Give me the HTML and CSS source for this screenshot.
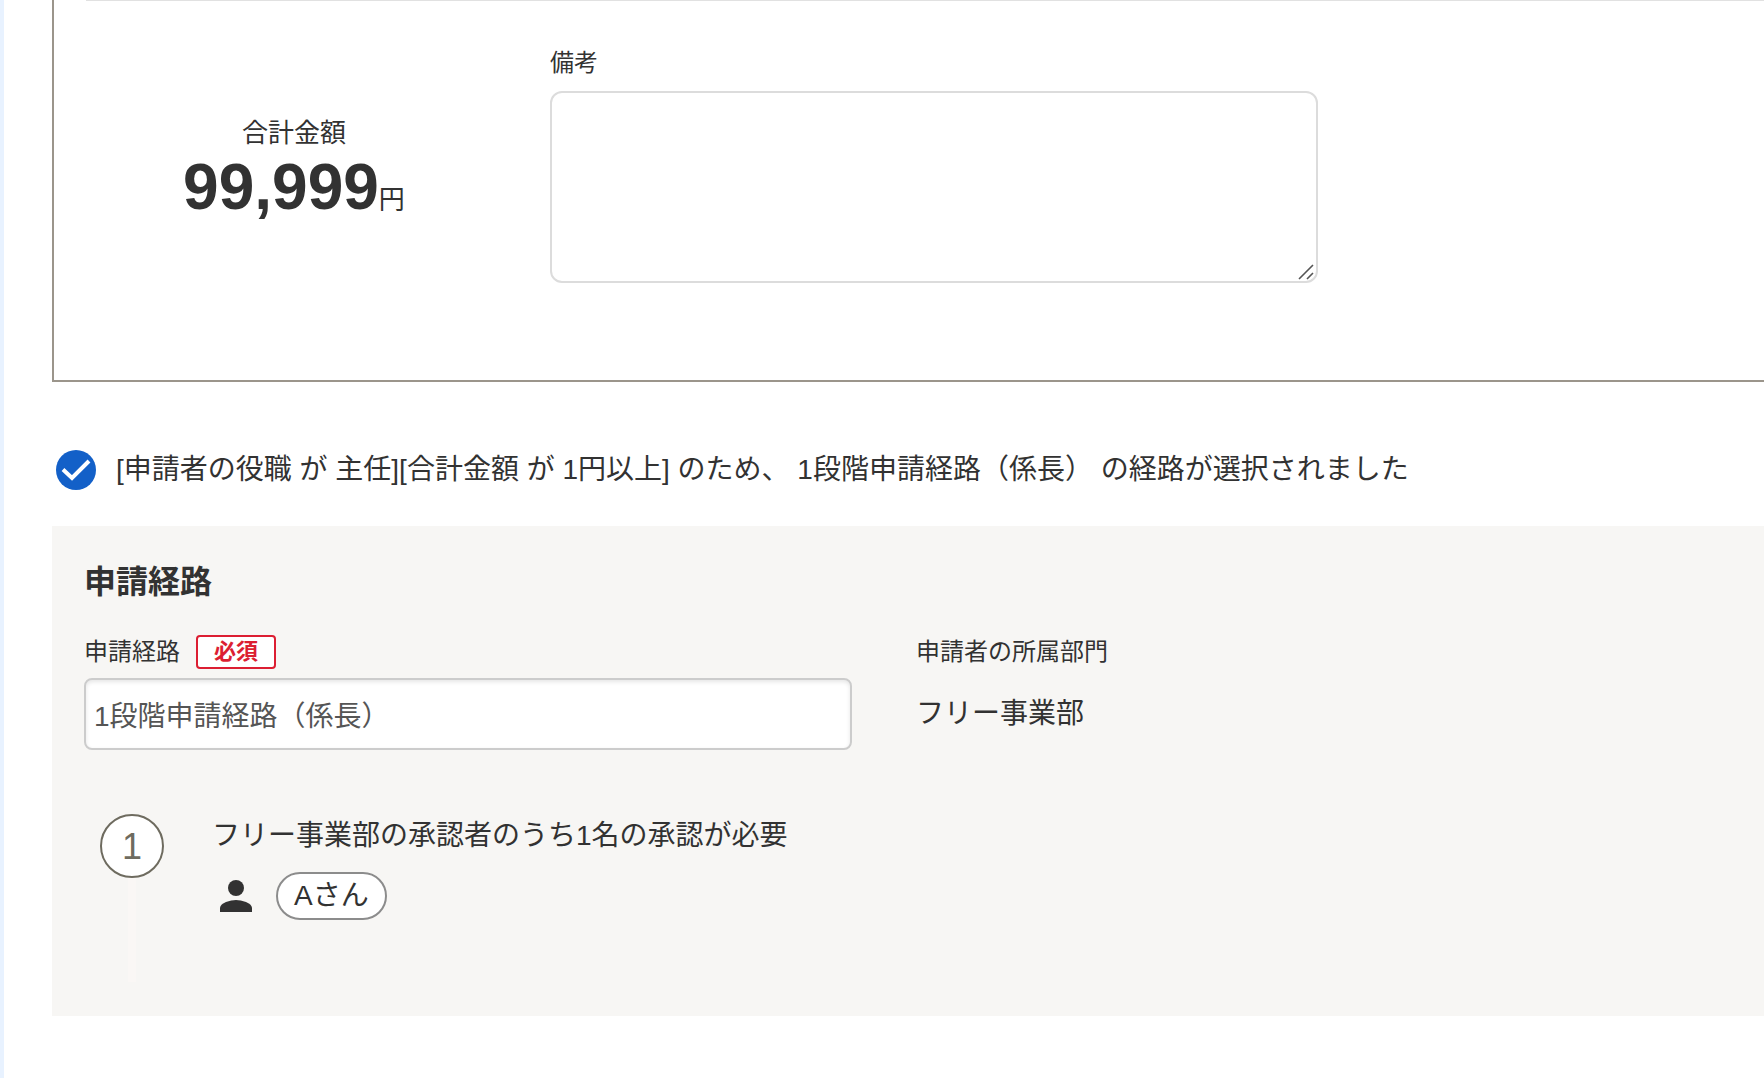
FILE: index.html
```html
<!DOCTYPE html>
<html lang="ja">
<head>
  <meta charset="UTF-8">
  <title>申請経路</title>
  <link rel="stylesheet" href="styles.css">
</head>
<body>
  <main class="page">
    <section class="summary">
      <hr class="divider">
      <div class="summary-body">
        <div class="total">
          <p class="total-label">合計金額</p>
          <p class="total-value"><strong>99,999</strong>円</p>
        </div>
        <div class="memo">
          <label for="memo">備考</label>
          <textarea id="memo"></textarea>
        </div>
      </div>
    </section>

    <div class="notice">
      <svg class="notice-icon" viewBox="0 0 40 40" aria-hidden="true">
        <circle cx="20" cy="20" r="20" fill="#1360c8"/>
        <path d="M7 19.500 L16 28 L33 11" fill="none" stroke="#fff" stroke-width="4"/>
      </svg>
      <p>[申請者の役職 が 主任][合計金額 が 1円以上] のため、 1段階申請経路（係長） の経路が選択されました</p>
    </div>

    <section class="route">
      <h2>申請経路</h2>
      <div class="route-fields">
        <div class="field">
          <div class="field-head">
            <label for="route">申請経路</label>
            <span class="required">必須</span>
          </div>
          <input type="text" id="route" value="1段階申請経路（係長）">
        </div>
        <div class="field">
          <div class="field-head">申請者の所属部門</div>
          <p class="field-text">フリー事業部</p>
        </div>
      </div>

      <div class="step">
        <div class="step-mark">
          <span class="step-number">1</span>
          <span class="step-line"></span>
        </div>
        <div class="step-body">
          <p>フリー事業部の承認者のうち1名の承認が必要</p>
          <div class="approver">
            <svg class="person" viewBox="0 0 32 32" aria-hidden="true">
              <circle cx="16" cy="8" r="8" fill="#323232"/>
              <path d="M0 32v-4c0-5.300 10.700-8 16-8s16 2.700 16 8v4z" fill="#323232"/>
            </svg>
            <span class="chip">Aさん</span>
          </div>
        </div>
      </div>
    </section>
  </main>
</body>
</html>
```

FILE: styles.css
```css
* {
  box-sizing: border-box;
}
body {
  margin: 0;
  min-height: 100vh;
  border-left: 4px solid #e8f2ff;
  background: #fff;
  color: #323232;
  font-family: "Liberation Sans", "Noto Sans CJK JP", sans-serif;
  font-size: 28px;
  line-height: 40px;
}
p, h2 {
  margin: 0;
}
.page {
  padding-left: 48px;
}
.summary {
  border: solid #9b958b;
  border-width: 0 0 2px 2px;
  padding-left: 32px;
}
.divider {
  height: 1px;
  margin: 0;
  border: none;
  background: #e1e1e1;
}
.summary-body {
  display: grid;
  grid-template-columns: 416px minmax(0, 768px);
  column-gap: 48px;
  padding: 44px 0 97px;
}
.total {
  padding-top: 68px;
  text-align: center;
  font-size: 26px;
}
.total-label {
  line-height: 40px;
}
.total-value {
  line-height: 68px;
}
.total-value strong {
  font-size: 64px;
}
.memo label {
  display: block;
  margin-bottom: 10px;
  font-size: 24px;
  line-height: 36px;
}
.memo textarea {
  display: block;
  width: 100%;
  height: 192px;
  padding: 16px;
  border: 2px solid #dcdcdc;
  border-radius: 12px;
  background: #fff url("data:image/svg+xml,%3Csvg xmlns='http://www.w3.org/2000/svg' width='18' height='18'%3E%3Cpath d='M1 16L15 2M9 16L15 10' stroke='%23555' stroke-width='1.6'/%3E%3C/svg%3E") no-repeat right bottom;
  font: inherit;
  color: inherit;
}
.memo textarea::-webkit-resizer {
  background: transparent;
}
.notice {
  display: flex;
  align-items: center;
  gap: 20px;
  padding: 68px 0 36px 4px;
}
.notice-icon {
  flex: none;
  width: 40px;
  height: 40px;
}
.route {
  background: #f7f6f4;
  padding: 32px 32px 34px;
}
.route h2 {
  margin-bottom: 28px;
  font-size: 32px;
  line-height: 48px;
}
.route-fields {
  display: grid;
  grid-template-columns: minmax(0, 768px) 1fr;
  column-gap: 64px;
}
.field-head {
  display: flex;
  align-items: center;
  gap: 16px;
  height: 36px;
  margin-bottom: 8px;
  font-size: 24px;
}
.required {
  padding: 0 16px;
  border: 2px solid #dc1e32;
  border-radius: 4px;
  background: #fff;
  color: #dc1e32;
  font-size: 22px;
  font-weight: bold;
  line-height: 30px;
}
.field input {
  display: block;
  width: 100%;
  height: 72px;
  padding: 0 8px;
  border: 2px solid #ccc;
  border-radius: 8px;
  background: #fff;
  box-shadow: inset 0 2px 4px rgba(0, 0, 0, 0.1);
  color: #555;
  font: inherit;
}
.field-text {
  padding: 16px 0;
}
.step {
  display: flex;
  gap: 48px;
  padding: 64px 16px 0;
}
.step-mark {
  display: flex;
  flex-direction: column;
  align-items: center;
}
.step-number {
  width: 64px;
  height: 64px;
  border: 2px solid #6e6b5f;
  border-radius: 50%;
  background: #fff;
  color: #6e6b5f;
  font-size: 36px;
  line-height: 62px;
  text-align: center;
}
.step-line {
  width: 8px;
  height: 104px;
  background: #faf7f5;
}
.step-body {
  padding-top: 2px;
}
.approver {
  display: flex;
  align-items: center;
  gap: 24px;
  padding: 16px 0 0 8px;
}
.person {
  width: 32px;
  height: 32px;
}
.chip {
  padding: 2px 16px;
  border: 2px solid #8c8c8c;
  border-radius: 24px;
  background: #fff;
}
```
